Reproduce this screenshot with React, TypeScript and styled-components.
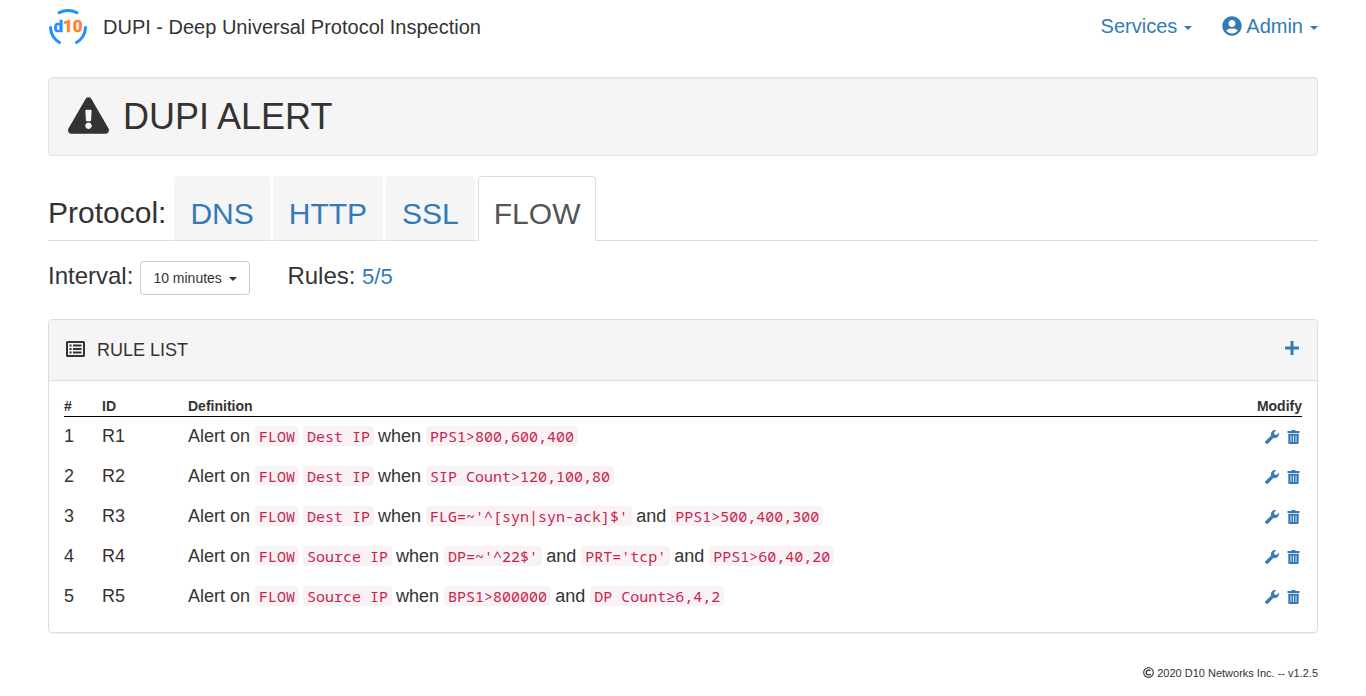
import React from 'react';
import styled, { createGlobalStyle, css } from 'styled-components';
import { FaExclamationTriangle, FaUserCircle, FaRegCopyright } from 'react-icons/fa';

const Global = createGlobalStyle`
  *, *::before, *::after { box-sizing: border-box; }
  body {
    margin: 0;
    background: #fff;
    color: #333;
    font: 14px/20px "Liberation Sans", Arial, sans-serif;
  }
`;

const Page = styled.div`
  padding: 0 48px 13px;
`;

const NavBar = styled.header`
  display: flex;
  align-items: center;
  justify-content: space-between;
  height: 54px;
  font-size: 20px;
`;

const Brand = styled.a`
  display: flex;
  align-items: center;
  gap: 15px;
  color: #333;
  text-decoration: none;
`;

const Menus = styled.nav`
  display: flex;
  gap: 30px;
`;

const plainButton = css`
  padding: 0;
  border: 0;
  background: none;
  color: #337ab7;
  font: inherit;
  cursor: pointer;
`;

const MenuButton = styled.button`
  ${plainButton}
  display: flex;
  align-items: center;
  line-height: 20px;
  padding-bottom: 2px;

  svg { margin-right: 4px; }

  &::after {
    content: '';
    margin: 4px 0 0 7px;
    border: 4px solid transparent;
    border-top-color: currentColor;
    border-bottom: 0;
  }
`;

const Banner = styled.section`
  display: flex;
  align-items: center;
  gap: 14px;
  margin: 23px 0 20px;
  padding: 17px 19px;
  border: 1px solid #e3e3e3;
  border-radius: 4px;
  background: #f5f5f5;
  box-shadow: inset 0 1px 1px rgba(0, 0, 0, 0.05);

  svg { margin-bottom: 2px; }

  h1 {
    margin: 0;
    font-size: 36px;
    font-weight: 500;
    line-height: 39px;
  }
`;

const Tabs = styled.nav`
  display: flex;
  gap: 3px;
  border-bottom: 1px solid #ddd;
  font-size: 30px;
  line-height: 42px;
`;

const TabsLabel = styled.span`
  padding: 16px 5px 6px 0;
`;

const Tab = styled.a<{ $active?: boolean }>`
  margin-bottom: -1px;
  padding: 16px 15px 5px;
  border: 1px solid ${p => (p.$active ? '#ddd' : '#f5f5f5')};
  border-bottom-color: ${p => (p.$active ? '#fff' : '#ddd')};
  border-radius: 4px 4px 0 0;
  background: ${p => (p.$active ? '#fff' : '#f5f5f5')};
  color: ${p => (p.$active ? '#555' : '#337ab7')};
  text-decoration: none;
`;

const Filters = styled.div`
  display: flex;
  align-items: flex-start;
  gap: 37px;
  margin: 20px 0 24px;
  font-size: 24px;
  line-height: 30px;
`;

const Field = styled.div`
  display: flex;
  align-items: flex-start;
  gap: 7px;
`;

const RuleCount = styled.div`
  a {
    color: #337ab7;
    font-size: 22px;
    text-decoration: none;
  }
`;

const SelectBox = styled.span`
  position: relative;
  display: block;
  line-height: 20px;

  &::after {
    content: '';
    position: absolute;
    top: 16px;
    right: 13px;
    border: 4px solid transparent;
    border-top-color: #333;
    border-bottom: 0;
    pointer-events: none;
  }
`;

const Select = styled.select`
  appearance: none;
  display: block;
  height: 34px;
  padding: 0 27px 0 12px;
  border: 1px solid #ccc;
  border-radius: 4px;
  background: #fff;
  color: #333;
  font: 14px/20px "Liberation Sans", Arial, sans-serif;
`;

const Panel = styled.section`
  border: 1px solid #ddd;
  border-radius: 4px;
  box-shadow: 0 1px 1px rgba(0, 0, 0, 0.05);
`;

const IconButton = styled.button`
  ${plainButton}
  display: inline-flex;
`;

const PanelHeading = styled.div`
  display: flex;
  align-items: center;
  gap: 12px;
  padding: 20px 18px 20px 17px;
  border-bottom: 1px solid #ddd;
  border-radius: 3px 3px 0 0;
  background: #f5f5f5;

  h2 {
    flex: 1;
    margin: 0;
    font-size: 18px;
    font-weight: 500;
    line-height: 20px;
  }

  > svg { margin-bottom: 2px; }
  ${IconButton} { padding-bottom: 4px; }
`;

const RuleTable = styled.table`
  width: calc(100% - 30px);
  margin: 15px;
  border-collapse: collapse;

  th {
    padding: 0;
    border-bottom: 1px solid #000;
    font-size: 14px;
    line-height: 20px;
    text-align: left;
  }

  td {
    height: 40px;
    padding: 0 0 2px;
    font-size: 18px;
    line-height: 24px;
  }

  th:nth-child(1) { width: 38px; }
  th:nth-child(2) { width: 86px; }
  th:last-child { width: 60px; text-align: right; }
`;

const Code = styled.code`
  margin-right: 4px;
  padding: 0 4px;
  border-radius: 4px;
  background: #f9f2f4;
  color: #c7254e;
  font: 15px/16px Consolas, "Noto Sans Mono", "DejaVu Sans Mono", monospace;
`;

const Word = styled.span`
  margin-right: 5px;
`;

const Actions = styled.div`
  display: flex;
  justify-content: flex-end;
  gap: 8px;
  padding: 2px 2px 0 0;
`;

const Footer = styled.footer`
  display: flex;
  justify-content: flex-end;
  align-items: center;
  gap: 3px;
  margin-top: 30px;
  font-size: 11px;
`;

const Logo = () => (
  <svg width="40" height="40" viewBox="0 0 40 40" role="img" aria-label="d10">
    <g fill="none" stroke="#1e90ff" strokeWidth="3" strokeLinecap="round">
      <path d="M11.2 5.6Q20 1.4 28.8 5.6" />
      <path d="M2.5 20.5Q3 30.5 11.5 35.5" />
      <path d="M37.500 20.5Q37 30.5 28.5 35.5" />
    </g>
    <text
      x="20"
      y="25"
      textAnchor="middle"
      fontFamily="Roboto, 'Liberation Sans', sans-serif"
      fontSize="17"
      fontWeight="bold"
      fill="#ff7f2a"
      stroke="#ff7f2a"
      strokeWidth="0.5"
    >
      <tspan fill="#1e90ff" stroke="#1e90ff">d</tspan>10
    </text>
  </svg>
);

const ListIcon = () => (
  <svg width="19" height="16" viewBox="0 0 19 16" aria-hidden="true">
    <rect x="1" y="1" width="17" height="14" rx="0.5" fill="none" stroke="#333" strokeWidth="2" />
    <path
      d="M3.5 3.5h2v2h-2zM3.5 7h2v2h-2zM3.5 10.5h2v2h-2zM7 3.6h8.5v1.8H7zM7 7.1h8.5v1.8H7zM7 10.6h8.5v1.8H7z"
      fill="#333"
    />
  </svg>
);

const PlusIcon = () => (
  <svg width="14" height="14" viewBox="0 0 14 14" aria-hidden="true">
    <path d="M7 0v14M0 7h14" stroke="currentColor" strokeWidth="3" />
  </svg>
);

const WrenchIcon = () => (
  <svg width="14" height="14" viewBox="0 0 14 14" aria-hidden="true">
    <path
      fill="currentColor"
      d="M13.7 2.8L11.5 5 9.4 4.6 9 2.5 11.2 0.3A4 4 0 0 0 6.2 5.4L0.6 11A1.7 1.7 0 0 0 3 13.4L8.6 7.8A4 4 0 0 0 13.7 2.8Z"
    />
  </svg>
);

const TrashIcon = () => (
  <svg width="13" height="14" viewBox="0 0 13 14" aria-hidden="true">
    <path
      fill="currentColor"
      fillRule="evenodd"
      d="M4.5 1V0h4v1h4v2H0.5V1zM1.3 3.8h10.4V13q0 1-1 1H2.3q-1 0-1-1zM3.6 5.5V12h0.8V5.5zM6.1 5.5V12h0.8V5.5zM8.6 5.5V12h0.8V5.5z"
    />
  </svg>
);

type Rule = { target: string; conditions: string[] };

const rules: Rule[] = [
  { target: 'Dest IP', conditions: ['PPS1>800,600,400'] },
  { target: 'Dest IP', conditions: ['SIP Count>120,100,80'] },
  { target: 'Dest IP', conditions: ["FLG=~'^[syn|syn-ack]$'", 'PPS1>500,400,300'] },
  { target: 'Source IP', conditions: ["DP=~'^22$'", "PRT='tcp'", 'PPS1>60,40,20'] },
  { target: 'Source IP', conditions: ['BPS1>800000', 'DP Count≥6,4,2'] },
];

const protocols = ['DNS', 'HTTP', 'SSL', 'FLOW'];

const App: React.FC = () => (
  <>
    <Global />
    <Page>
      <NavBar>
        <Brand href="#">
          <Logo />
          DUPI - Deep Universal Protocol Inspection
        </Brand>
        <Menus>
          <MenuButton type="button" aria-haspopup="menu">Services</MenuButton>
          <MenuButton type="button" aria-haspopup="menu">
            <FaUserCircle />
            Admin
          </MenuButton>
        </Menus>
      </NavBar>

      <Banner>
        <FaExclamationTriangle size={41} />
        <h1>DUPI ALERT</h1>
      </Banner>

      <Tabs aria-label="Protocol">
        <TabsLabel>Protocol:</TabsLabel>
        {protocols.map(name => (
          <Tab key={name} href={`#${name}`} $active={name === 'FLOW'}>{name}</Tab>
        ))}
      </Tabs>

      <Filters>
        <Field>
          <label htmlFor="interval">Interval:</label>
          <SelectBox>
            <Select id="interval" defaultValue="10 minutes">
              <option>10 minutes</option>
            </Select>
          </SelectBox>
        </Field>
        <RuleCount>
          Rules: <a href="#rules">5/5</a>
        </RuleCount>
      </Filters>

      <Panel id="rules">
        <PanelHeading>
          <ListIcon />
          <h2>RULE LIST</h2>
          <IconButton type="button" aria-label="Add rule"><PlusIcon /></IconButton>
        </PanelHeading>
        <RuleTable>
          <thead>
            <tr><th>#</th><th>ID</th><th>Definition</th><th>Modify</th></tr>
          </thead>
          <tbody>
            {rules.map((rule, i) => (
              <tr key={i}>
                <td>{i + 1}</td>
                <td>R{i + 1}</td>
                <td>
                  <Word>Alert on</Word>
                  <Code>FLOW</Code>
                  <Code>{rule.target}</Code>
                  {rule.conditions.map((condition, n) => (
                    <React.Fragment key={condition}>
                      <Word>{n === 0 ? 'when' : 'and'}</Word>
                      <Code>{condition}</Code>
                    </React.Fragment>
                  ))}
                </td>
                <td>
                  <Actions>
                    <IconButton type="button" aria-label={`Edit R${i + 1}`}><WrenchIcon /></IconButton>
                    <IconButton type="button" aria-label={`Delete R${i + 1}`}><TrashIcon /></IconButton>
                  </Actions>
                </td>
              </tr>
            ))}
          </tbody>
        </RuleTable>
      </Panel>

      <Footer>
        <FaRegCopyright />
        2020 D10 Networks Inc. -- v1.2.5
      </Footer>
    </Page>
  </>
);

export default App;
